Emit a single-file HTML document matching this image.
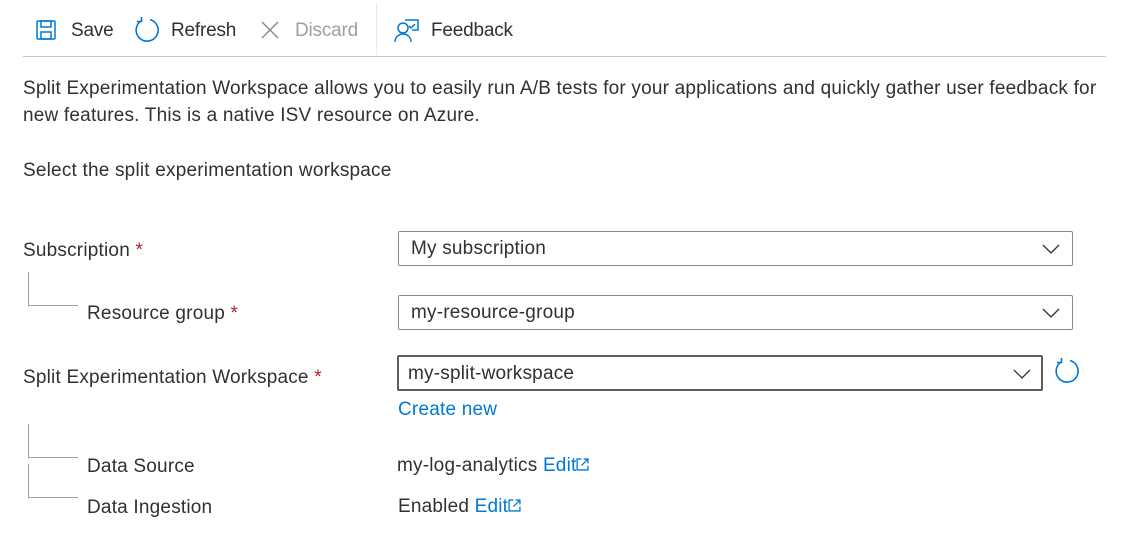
<!DOCTYPE html>
<html><head><meta charset="utf-8"><style>
body{margin:0;width:1132px;height:538px;background:#fff;font-family:"Liberation Sans",sans-serif;font-size:19px;letter-spacing:0.2px;color:#323130;position:relative;overflow:hidden}
.a{position:absolute;white-space:nowrap;line-height:24px}
.tb{letter-spacing:-0.2px}
.req{color:#a4262c}
.link{color:#0078d4}
.dd{position:absolute;left:398px;width:675px;height:35px;border:1px solid #8a8886;border-radius:2px;box-sizing:border-box}
.dd span{position:absolute;left:12px;top:5px;line-height:24px}
.dd svg{position:absolute;right:12px;top:12px}
.tv{position:absolute;border-left:1px solid #a19f9d;border-bottom:1px solid #a19f9d;left:28px;width:49px;height:33px}
</style></head><body>
<svg class="a" style="left:36px;top:20px" width="20" height="20" viewBox="0 0 20 20" fill="none" stroke="#0078d4" stroke-width="1.5"><rect x="1" y="1" width="18" height="18" rx="1"/><rect x="5" y="1" width="10" height="6"/><rect x="5" y="12" width="10" height="7"/></svg>
<div class="a tb" style="left:71px;top:19px">Save</div>
<svg class="a" style="left:134px;top:17px" width="26" height="26" viewBox="0 0 26 26" fill="none" stroke="#0078d4" stroke-width="1.6"><path d="M7 4A11 11 0 1 0 16 2.5"/><path d="M7.5 0V4.5H3"/></svg>
<div class="a tb" style="left:171px;top:19px">Refresh</div>
<svg class="a" style="left:260px;top:20px" width="20" height="20" viewBox="0 0 20 20" stroke="#8a8886" stroke-width="1.4"><path d="M2 2L18 18M18 2L2 18"/></svg>
<div class="a tb" style="left:295px;top:19px;color:#a19f9d">Discard</div>
<div style="position:absolute;left:376px;top:3px;width:1px;height:52px;background:#edebe9"></div>
<svg class="a" style="left:394px;top:17px" width="26" height="26" viewBox="0 0 26 26" fill="none" stroke="#0078d4" stroke-width="1.5"><circle cx="9" cy="11" r="5"/><path d="M1 25c0-5 4-8 8-8s8 3 8 8"/><path d="M11 3h13v10h-6"/><path d="M15 9l2 2 4-4"/></svg>
<div class="a tb" style="left:431px;top:19px">Feedback</div>
<div style="position:absolute;left:23px;top:56px;width:1083px;height:1px;background:#c8c6c4"></div>
<div class="a" style="left:23px;top:77px">Split Experimentation Workspace allows you to easily run A/B tests for your applications and quickly gather user feedback for</div>
<div class="a" style="left:23px;top:104px">new features. This is a native ISV resource on Azure.</div>
<div class="a" style="left:23px;top:159px">Select the split experimentation workspace</div>
<div class="a" style="left:23px;top:239px">Subscription <span class="req">*</span></div>
<div class="dd" style="top:231px"><span>My subscription</span><svg width="18" height="10" viewBox="0 0 18 10" fill="none" stroke="#323130" stroke-width="1.3"><path d="M1 1l8 8 8-8"/></svg></div>
<div class="tv" style="top:272px"></div>
<div class="a" style="left:87px;top:302px">Resource group <span class="req">*</span></div>
<div class="dd" style="top:295px"><span>my-resource-group</span><svg width="18" height="10" viewBox="0 0 18 10" fill="none" stroke="#323130" stroke-width="1.3"><path d="M1 1l8 8 8-8"/></svg></div>
<div class="a" style="left:23px;top:366px">Split Experimentation Workspace <span class="req">*</span></div>
<div class="dd" style="top:355px;left:397px;width:646px;height:36px;border:2px solid #605e5c"><span style="left:9px;top:5px">my-split-workspace</span><svg style="right:10px;top:12px" width="18" height="10" viewBox="0 0 18 10" fill="none" stroke="#323130" stroke-width="1.3"><path d="M1 1l8 8 8-8"/></svg></div>
<svg class="a" style="left:1054px;top:358px" width="26" height="26" viewBox="0 0 26 26" fill="none" stroke="#0078d4" stroke-width="1.6"><path d="M7 4A11 11 0 1 0 16 2.5"/><path d="M7.5 0V4.5H3"/></svg>
<div class="a link" style="left:398px;top:398px">Create new</div>
<div class="tv" style="top:424px"></div>
<div class="a" style="left:87px;top:455px">Data Source</div>
<div class="a" style="left:397px;top:454px">my-log-analytics <span class="link">Edit<svg width="13" height="13" viewBox="0 0 12 12" fill="none" stroke="#0078d4" stroke-width="1.2"><path d="M5 1H1v10h10V7M7 1h4v4M11 1L5 7"/></svg></span></div>
<div class="tv" style="top:464px"></div>
<div class="a" style="left:87px;top:496px">Data Ingestion</div>
<div class="a" style="left:398px;top:495px">Enabled <span class="link">Edit<svg width="13" height="13" viewBox="0 0 12 12" fill="none" stroke="#0078d4" stroke-width="1.2"><path d="M5 1H1v10h10V7M7 1h4v4M11 1L5 7"/></svg></span></div>
</body></html>
